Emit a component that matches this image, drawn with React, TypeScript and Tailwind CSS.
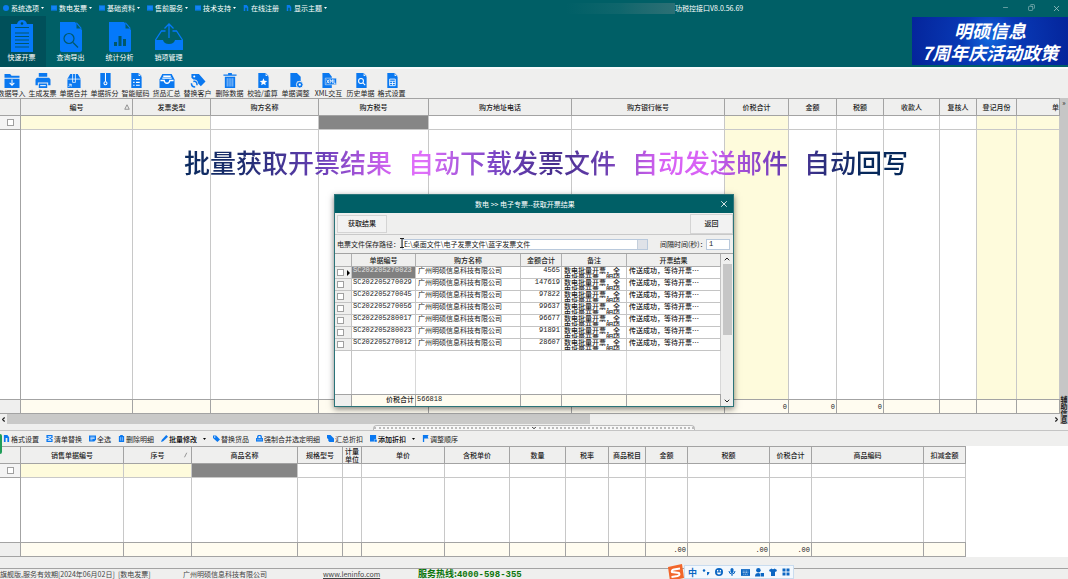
import type { ReactNode } from "react"
import { ChevronDown, ChevronLeft, ChevronRight, ChevronUp, Copy, Minus, X } from "lucide-react"

type Column = {
  label: string
  width?: string
  active?: "yellow" | "gray"
  yellow?: boolean
  total?: string
  mark?: string
  align?: string
}

const invoiceColumns: Column[] = [
  { label: "编号", width: "w-[112px]", active: "yellow", mark: "M4 1 7 7H1z" },
  { label: "发票类型", width: "w-[78px]", active: "yellow" },
  { label: "购方名称", width: "w-[108px]" },
  { label: "购方税号", width: "w-[110px]", active: "gray" },
  { label: "购方地址电话", width: "w-[143px]" },
  { label: "购方银行帐号", width: "w-[153px]" },
  { label: "价税合计", width: "w-[64px]", yellow: true, total: "0" },
  { label: "金额", width: "w-[48px]", total: "0" },
  { label: "税额", width: "w-[47px]", total: "0" },
  { label: "收款人", width: "w-[56px]" },
  { label: "复核人", width: "w-[37px]" },
  { label: "登记月份", width: "w-[40px]", yellow: true },
  { label: "单", yellow: true, align: "text-right" },
]

const detailColumns: Column[] = [
  { label: "销售单据编号", width: "w-[103px]", active: "yellow" },
  { label: "序号", width: "w-[68px]", active: "yellow", mark: "M2 7 5 1" },
  { label: "商品名称", width: "w-[106px]", active: "gray" },
  { label: "规格型号", width: "w-[45px]" },
  { label: "计量单位", width: "w-[19px]" },
  { label: "单价", width: "w-[83px]" },
  { label: "含税单价", width: "w-[65px]" },
  { label: "数量", width: "w-[56px]" },
  { label: "税率", width: "w-[43px]" },
  { label: "商品税目", width: "w-[37px]" },
  { label: "金额", width: "w-[42px]", total: ".00" },
  { label: "税额", width: "w-[82px]", total: ".00" },
  { label: "价税合计", width: "w-[42px]", total: ".00" },
  { label: "商品编码", width: "w-[112px]" },
  { label: "扣减金额", width: "w-[42px]" },
]

const results = [
  ["SC202205270023", "4565"],
  ["SC202205270029", "147619"],
  ["SC202205270045", "97822"],
  ["SC202205270056", "99637"],
  ["SC202205280017", "96677"],
  ["SC202205280023", "91891"],
  ["SC202205270012", "28607"],
]

const slogans = ["批量获取开票结果", "自动下载发票文件", "自动发送邮件", "自动回写"]

function Svg({ className, children, box = "0 0 16 16" }: { className: string; children: ReactNode; box?: string }) {
  return (
    <svg viewBox={box} className={className} fill="currentColor" aria-hidden="true">
      {children}
    </svg>
  )
}

// white strokes drawn on top of the blue shapes
const line = { fill: "none", stroke: "#fff", strokeWidth: 1.1 }
const dark = { fill: "none", stroke: "#00586a", strokeWidth: 1.2 }
const page = <path d="M3 0h7l4 4v12H3zM10.800 0v3.300H14z" />

const toolbar: { label: string; wide?: boolean; icon: ReactNode }[] = [
  { label: "数据导入", icon: <><path d="M0 1h6l1.500 2H16v2H0zM0 6h16v10H0z" /><path {...line} d="M8 7v6M5.500 10.500 8 13l2.500-2.500" /></> },
  { label: "生成发票", icon: <><path d="M3.500 0h9v4h-9zM1.500 5h13L16 7v6h-2.500v-3h-11v3H0V7zM3.500 11.200h9V16h-9z" /><path {...line} d="M5 13.500h6" /></> },
  { label: "单据合并", icon: <><path d="M4 1h8l3 5v10H1V6z" /><path {...line} strokeWidth={0.800} d="M1 6.500h14M6.500 1v9h3V1M2 15l3-3M2.500 12H5v2.500" /></> },
  { label: "单据拆分", icon: <><path d="M3 0h11v16H3z" /><path {...line} d="M8.500 0v9" /><circle {...line} cx="8.500" cy="11" r="1.600" /></> },
  { label: "智能赋码", icon: <>{page}<path {...line} d="M5 7h1.500M8 7h4M5 10h1.500M8 10h4M5 13h1.500M8 13h4" /></> },
  { label: "货品汇总", icon: <><path d="M3 1h10l3 6v9H0V7z" /><path {...line} d="M4 3.500h8M3 5.500h10M1 8h4q.5 3 3 3t3-3h4" strokeWidth={1.500} /></> },
  { label: "替换客户", icon: <><path d="M1 1h8l7 8-5 5-3-3a4 4 0 0 0-5-4L1 5z" /><circle cx="4" cy="3.800" r="1.100" fill="#fff" /><path d="M3 9q4-1 4 4M1 11q0 4 4 4" fill="none" stroke="currentColor" strokeWidth="1.600" /></> },
  { label: "删除数据", wide: true, icon: <><path d="M6 0h4v1.500h5V3H1V1.500h5zM2.500 4h11v12h-11z" /><path {...line} d="M5 5.500v9M7 5.500v9M9 5.500v9M11 5.500v9" strokeWidth={0.600} /></> },
  { label: "校验/重算", wide: true, icon: <>{page}<path fill="#fff" d="m8.500 5.500 1.100 2.700 2.900.2-2.200 1.900.7 2.800-2.500-1.500L6 13.100l.7-2.800-2.200-1.900 2.900-.2z" /></> },
  { label: "单据调整", wide: true, icon: <><path d="M2 0h7l4 4v5H9v6H2z" /><circle cx="12" cy="12.500" r="3.600" stroke="#efefee" /><circle cx="12" cy="12.500" r="1.200" fill="#fff" /></> },
  { label: "XML交互", wide: true, icon: <><path d="M1 0h7l3 4v12H1z" /><path d="M4 5.500h12v7H4z" stroke="#efefee" strokeWidth="0.600" /><path {...line} strokeWidth={0.900} d="m5.500 7 2.500 4M8 7l-2.500 4M9.300 11V7l1.300 2 1.300-2v4M13.300 7v4h1.700" /></> },
  { label: "历史单据", icon: <>{page}<circle {...line} cx="8" cy="8.500" r="2.600" /><path {...line} d="m10 10.500 2.500 2.500" /></> },
  { label: "格式设置", icon: <>{page}<path {...line} strokeWidth={0.900} d="M5.500 6.500h6v7h-6zM5.500 8.800h6M5.500 11.200h6M8.500 9v4" /></> },
]

const ribbon: { label: string; icon: ReactNode }[] = [
  { label: "快速开票", icon: <><path d="M5 4h6q1-4 5-4t5 4h6v28H5z" /><circle cx="16" cy="3.500" r="1.300" fill="#00505c" /><path {...dark} d="M9 7.500h14M9 13h14M9 16.500h14M9 20h14M9 23.500h14M9 27h14" /></> },
  { label: "查询导出", icon: <><path d="M5 2h15l7 8v20q0 2-2 2H7q-2 0-2-2zM21.500 2v6.500H27z" /><circle {...dark} cx="14" cy="18.500" r="5" /><path {...dark} d="m18 22.500 5 5" /></> },
  { label: "统计分析", icon: <><path d="M5 2h15l7 8v20q0 2-2 2H7q-2 0-2-2zM21.500 2v6.500H27z" /><path fill="#00586a" d="M10 22h3v4h-3zM14.500 16h3v10h-3zM19 19h3v7h-3z" /></> },
  { label: "销项管理", icon: <><path d="M2 20h8q1 4 6 4t6-4h8v10H2z" /><path fill="none" stroke="currentColor" strokeWidth="1.300" d="M2.500 20l6-9h4M29.500 20l-6-9h-4M16 18V4M11.500 8.500 16 4l4.500 4.500" /></> },
]

const smallFile = <path d="M2 0h8l4 5v11H2zM6 7v9h4V7z" fillRule="evenodd" />
const smallBox = <><path d="M0 1h16v14H0z" /><path {...line} d="M3 5h10M3 8.500h10" stroke="#3a9dff" /></>

const menus = [
  { label: "系统选项", arrow: true, icon: <circle cx="8" cy="8" r="8" /> },
  { label: "数电发票", arrow: true, icon: smallBox },
  { label: "基础资料", arrow: true, icon: smallBox },
  { label: "售前服务", arrow: true, icon: smallBox },
  { label: "技术支持", arrow: true, icon: smallBox },
  { label: "在线注册", arrow: false, icon: smallFile },
  { label: "显示主题", arrow: true, icon: smallFile },
]

const detailTools = [
  { label: "格式设置", icon: smallFile },
  { label: "清单替换", icon: <><path d="M1 0h14v16H1z" /><path {...line} strokeWidth={2} d="M4 4h8l-7 4 7 4H4M0 8h4M12 8h4" /></> },
  { label: "全选", icon: <><path d="M0 1h16v10l-4 4H0z" /><path {...line} strokeWidth={1.500} d="M3 5h10M3 8h10M3 11h5" /></> },
  { label: "删除明细", icon: <><path d="M2 2h3V0h6v2h3v14H2z" /><path {...line} d="M6 5v8M10 5v8" /></> },
  { label: "批量修改", arrow: true, icon: <path d="M12 0l4 4L5 14l-5 2 2-5z" /> },
  { label: "替换货品", icon: <><path d="M0 1h7l9 9-6 6-10-9z" /><circle cx="4" cy="4.500" r="1.500" fill="#fff" /></> },
  { label: "强制合并选定明细", icon: <><path d="M0 7h16v8H0z" /><path d="M4 7V4q0-3 4-3t4 3v3" fill="none" stroke="currentColor" strokeWidth="3" /><path {...line} d="M2 11h12" /></> },
  { label: "汇总折扣", icon: <path d="M0 0h8l5 5 3 3v8H5l-1-5-4-4zM3 9l3 3-3 3z" /> },
  { label: "添加折扣", arrow: true, icon: <><path d="M0 0h14v15H0z" /><path d="M10 10h6v6h-6z" stroke="#efefee" /></> },
  { label: "调整顺序", icon: <path d="M2 0h13l-2 4 2 4H5v8H2z" /> },
]

function Caret() {
  return (
    <svg viewBox="0 0 6 4" className="h-[2px] w-[3px] shrink-0" fill="currentColor" aria-hidden="true">
      <path d="M0 0h6L3 4z" />
    </svg>
  )
}

function CheckBox({ label }: { label: string }) {
  return (
    <input type="checkbox" aria-label={label} className="block mx-auto size-[7px] appearance-none border border-[#a0a0a0] bg-white checked:bg-blue-600" />
  )
}

function DataGrid({ columns, name, className }: { columns: Column[]; name: string; className: string }) {
  return (
    <table className={`h-full table-fixed border-separate border-spacing-0 leading-[8px] ${className}`}>
      <thead>
        <tr className="bg-[#efefee]">
          <th aria-label="选择" className="h-[18px] w-[21px] border-y border-r border-[#a3a3a3]" />
          {columns.map((col) => (
            <th key={col.label} className={`relative h-[18px] border-y border-r border-[#a3a3a3] p-0 font-medium ${col.width ?? ""} ${col.align ?? ""}`}>
              {col.label}
              {col.mark && (
                <svg viewBox="0 0 8 8" className="absolute top-[5px] right-[2px] size-[6px]" fill="none" stroke="#777" aria-hidden="true">
                  <path d={col.mark} />
                </svg>
              )}
            </th>
          ))}
        </tr>
      </thead>
      <tbody>
        <tr>
          <td className="h-[14px] border-r border-b border-[#a3a3a3] bg-[#f4f4f4]">
            <CheckBox label={name} />
          </td>
          {columns.map((col) => (
            <td
              key={col.label}
              className={`h-[14px] border-r border-b border-[#c8c8c8] ${
                col.active === "gray" ? "bg-[#868686]" : col.active === "yellow" || col.yellow ? "bg-[#fefbdc]" : "bg-white"
              }`}
            />
          ))}
        </tr>
        <tr>
          <td className="border-r border-[#a3a3a3] bg-white" />
          {columns.map((col) => (
            <td key={col.label} className={`border-r border-[#c8c8c8] ${col.yellow ? "bg-[#fefbdc]" : "bg-white"}`} />
          ))}
        </tr>
      </tbody>
      <tfoot className="bg-[#fffcf0] text-right font-['Liberation_Mono',monospace]">
        <tr>
          <td className="h-[15px] border-y border-r border-[#a3a3a3] bg-[#efefee]" />
          {columns.map((col) => (
            <td key={col.label} className="h-[15px] border-y border-r border-[#a3a3a3] pr-px">
              {col.total}
            </td>
          ))}
        </tr>
      </tfoot>
    </table>
  )
}

function Header() {
  return (
    <header className="shrink-0 bg-[#005f66] text-white">
      <div className="flex h-[16px] items-center">
        <nav className="flex basis-[53%] items-center gap-[7px] pl-[3px]">
          {menus.map((menu) => (
            <button key={menu.label} className="flex items-center gap-[2px] leading-[10px]">
              <Svg className="size-[6px] text-[#087cf0]">{menu.icon}</Svg>
              {menu.label}
              {menu.arrow && <Caret />}
            </button>
          ))}
        </nav>
        <div className="h-[11px] w-[109px] bg-linear-to-r from-[#005f66] via-[#0f666c] to-[#2c7075]" />
        <h1 className="leading-[10px]">功税控接口V8.0.56.69</h1>
        <div className="ml-auto flex text-[#a9c9cb]">
          <button aria-label="最小化" className="flex w-[26px] justify-center"><Minus size={7} /></button>
          <button aria-label="还原" className="flex w-[26px] justify-center"><Copy size={7} className="-scale-x-100" /></button>
          <button aria-label="关闭" className="flex w-[24px] justify-center"><X size={9} /></button>
        </div>
      </div>
      <div className="flex h-[51px] items-stretch">
        {ribbon.map((item, i) => (
          <button
            key={item.label}
            className={`flex flex-col items-center pt-[4px] leading-[11px] ${i === 0 ? "w-[46px] bg-[#00505a] pr-[3px]" : "w-[49px]"}`}
          >
            <Svg box="0 0 32 32" className="size-[32px] text-[#0479fa]">{item.icon}</Svg>
            {item.label}
          </button>
        ))}
        <a
          href="#promo"
          className="ml-auto mt-px mb-[2px] flex w-[156px] flex-col items-center justify-center bg-[radial-gradient(circle_at_50%_45%,#1268dd_0%,#0838b4_35%,#04249a_100%)] text-[18px] leading-[22px] font-bold italic"
        >
          <span>明硕信息</span>
          <span>7周年庆活动政策</span>
        </a>
      </div>
    </header>
  )
}

function ResultDialog() {
  const cell = "h-[12px] border-r border-b border-[#c4c4c4] p-0 align-top leading-[7px]"
  const head = "h-[13px] border-r border-b border-[#b0b0b0] p-0 font-medium"
  return (
    <section
      role="dialog"
      aria-labelledby="dialog-title"
      className="absolute top-[194px] left-1/2 flex h-[213px] w-[400px] -translate-x-1/2 flex-col border border-[#2b7479] bg-[#efefee] shadow-[0_2px_6px_rgba(0,0,0,0.5)]"
    >
      <div className="relative flex h-[18px] shrink-0 items-center justify-center bg-[#005f66] text-white">
        <h2 id="dialog-title" className="pr-[18px] leading-[10px]">数电 &gt;&gt; 电子专票--获取开票结果</h2>
        <button aria-label="关闭窗口" className="absolute right-[4px] top-[4px]"><X size={10} /></button>
      </div>
      <div className="flex h-[22px] shrink-0 items-center justify-between border-b border-[#c9c9c9] pl-[2px]">
        <button className="h-[18px] w-[50px] border border-[#d4d4d4] bg-[#f2f2f2] font-medium">获取结果</button>
        <button className="h-[20px] w-[43px] border border-[#d4d4d4] bg-[#f2f2f2] font-medium">返回</button>
      </div>
      <div className="flex h-[18px] shrink-0 items-center pl-[2px] pr-[3px]">
        <label htmlFor="path" className="w-[65px] shrink-0">电票文件保存路径：</label>
        <div className="flex h-[11px] min-w-0 flex-1 border border-[#b9c9dc] bg-white">
          <input id="path" className="min-w-0 flex-1 pl-px leading-[9px] outline-none" defaultValue="E:\桌面文件\电子发票文件\蓝字发票文件" />
          <button aria-label="浏览" className="w-[10px] border-l border-[#c4cfdc] bg-[#dfe2e8]" />
        </div>
        <label htmlFor="interval" className="ml-[12px] w-[46px] shrink-0">间隔时间(秒)：</label>
        <input id="interval" className="h-[11px] w-[24px] border border-[#b9c9dc] bg-white pl-[2px] font-['Liberation_Mono',monospace]" defaultValue="1" />
      </div>
      <div className="flex min-h-0 flex-1 border-t border-[#a3a3a3]">
        <table className="h-full flex-1 table-fixed border-separate border-spacing-0 bg-white leading-[8px]">
          <thead className="bg-[#efefee]">
            <tr>
              <th aria-label="选择" className={`w-[17px] ${head}`} />
              <th className={`w-[64px] ${head}`}>单据编号</th>
              <th className={`w-[105px] ${head}`}>购方名称</th>
              <th className={`w-[41px] ${head}`}>金额合计</th>
              <th className={`w-[65px] ${head}`}>备注</th>
              <th className={head}>开票结果</th>
            </tr>
          </thead>
          <tbody>
            {results.map(([id, amount], i) => (
              <tr key={id}>
                <td className={`bg-[#efefee] ${cell}`}>
                  <div className="flex items-center gap-[3px] pt-[2px] pl-[2px]">
                    <input type="checkbox" aria-label={id} className="size-[7px] appearance-none border border-[#a0a0a0] bg-white checked:bg-blue-600" />
                    {i === 0 && (
                      <svg viewBox="0 0 4 8" className="h-[6px] w-[3px]" aria-hidden="true"><path d="M0 0l4 4-4 4z" /></svg>
                    )}
                  </div>
                </td>
                <td className={`font-['Liberation_Mono',monospace] ${i === 0 ? "bg-[#808080] text-[#e4e4e4]" : ""} ${cell}`}>
                  <span className="pl-px">{id}</span>
                </td>
                <td className={cell}><span className="pl-[2px]">广州明硕信息科技有限公司</span></td>
                <td className={`text-right font-['Liberation_Mono',monospace] ${cell}`}><span className="pr-px">{amount}</span></td>
                <td className={cell}>
                  <div className="ml-[2px] h-[11px] w-[58px] overflow-hidden font-medium break-all whitespace-normal">
                    数电批量开票，全电批量开票，明硕
                  </div>
                </td>
                <td className={cell}><span className="pl-[2px] font-medium">传送成功，等待开票⋯</span></td>
              </tr>
            ))}
            <tr>
              <td className="border-r border-[#c4c4c4]" />
              <td className="border-r border-[#d8d8d8]" />
              <td className="border-r border-[#d8d8d8]" />
              <td className="border-r border-[#d8d8d8]" />
              <td className="border-r border-[#d8d8d8]" />
              <td className="border-r border-[#d8d8d8]" />
            </tr>
          </tbody>
          <tfoot className="bg-[#fffcf0]">
            <tr>
              <td className="h-[12px] border-t border-r border-[#a3a3a3] bg-[#efefee]" />
              <td className="h-[12px] border-t border-r border-[#a3a3a3] p-0 pr-px text-right align-top font-medium">价税合计</td>
              <td className="h-[12px] border-t border-r border-[#a3a3a3] p-0 pl-px align-top font-['Liberation_Mono',monospace]">566818</td>
              <td className="border-t border-r border-[#a3a3a3]" />
              <td className="border-t border-r border-[#a3a3a3]" />
              <td className="border-t border-r border-[#a3a3a3]" />
            </tr>
          </tfoot>
        </table>
        <div className="flex w-[12px] flex-col items-center bg-[#efefee] py-px">
          <ChevronUp size={8} strokeWidth={3} />
          <div className="mt-px h-[71px] w-[9px] bg-[#c6c6c6]" />
          <ChevronDown size={8} strokeWidth={3} className="mt-auto" />
        </div>
      </div>
      {/* text cursor resting on the path box */}
      <svg viewBox="0 0 4 10" className="absolute top-[43px] left-[65px] h-[10px] w-[4px]" aria-hidden="true">
        <path d="M0 .5h4M2 0v10M0 9.500h4" stroke="#222" fill="none" />
      </svg>
    </section>
  )
}

function ImeBar() {
  return (
    <div className="absolute bottom-0 left-[667px] flex h-[14px] items-center text-[#0b66c3]">
      <Svg className="size-[17px] shrink-0" box="0 0 17 17">
        <path d="M1 3 15 0l2 14-14 3z" fill="#f2662a" />
        <path d="M13 4.500 7 5.500q-3 .8-2 2.500l7 1q1.500 2-1.500 3l-6 1" fill="none" stroke="#fff" strokeWidth="2" />
      </Svg>
      <div className="flex h-full items-center gap-[5px] border border-[#c9dcef] bg-[#f3f8fd] px-[3px]">
        <span className="text-[9px] leading-[9px] font-bold">中</span>
        <Svg className="size-[8px]"><circle cx="4" cy="5" r="2.500" /><path d="M10 8h5q0 5-5 7z" /></Svg>
        <Svg className="size-[8px]"><circle cx="8" cy="8" r="8" /><path fill="#fff" d="M4 4h2.500v3H4zM9.500 4H12v3H9.500zM3.500 9h9q-1 4-4.500 4T3.500 9z" /></Svg>
        <Svg className="size-[8px]"><rect x="5" width="6" height="10" rx="3" /><path d="M2 6q0 6 6 6t6-6M8 12v4" fill="none" stroke="currentColor" strokeWidth="2" /></Svg>
        <Svg className="size-[9px]"><path d="M0 2h16v12H0z" /><path {...line} d="M3 5.500h10M3 8h10M4 11h8" strokeDasharray="2 1" /></Svg>
        <Svg className="size-[9px]"><circle cx="6" cy="4" r="4" /><path d="M0 15q0-6 6-6 2 0 3 1v5zM10 9h6v6h-6z" /></Svg>
        <Svg className="size-[8px]"><path d="M5 1q3 3 6 0l5 3-2 4-2-1v9H4V7L2 8 0 4z" /></Svg>
        <Svg className="size-[8px]"><path d="M1 1h6v6H1zM9 1h6v6H9zM1 9h6v6H1zM9 9h6v6H9z" /></Svg>
      </div>
    </div>
  )
}

export default function App() {
  return (
    <div lang="zh-CN" className="relative flex h-screen flex-col overflow-hidden bg-[#efefee] font-['Noto_Sans_CJK_SC',sans-serif] text-[7px] whitespace-nowrap text-[#222]">
      <Header />

      <div className="flex h-[31px] shrink-0 border-t-2 border-[#f8fafb]">
        <div className="-ml-[4px] flex pt-[4px]">
          {toolbar.map((tool) => (
            <button key={tool.label} className={`flex flex-col items-center leading-[10px] ${tool.wide ? "w-[33px]" : "w-[31px]"}`}>
              <Svg className="h-[15px] w-[16px] shrink-0 text-[#0a78f0]">{tool.icon}</Svg>
              {tool.label}
            </button>
          ))}
        </div>
      </div>

      <main className="flex min-h-0 flex-1">
        <div className="flex min-w-0 flex-1 flex-col">
          <div className="min-h-0 flex-1">
            <DataGrid columns={invoiceColumns} name="发票" className="w-full" />
          </div>
          <div className="flex h-[10px] shrink-0 items-center">
            <ChevronLeft size={7} strokeWidth={4} className="shrink-0" />
            <div className="h-full w-[55%] bg-[#c9c9c8]" />
            <ChevronRight size={7} strokeWidth={4} className="ml-auto shrink-0" />
          </div>
        </div>
        <aside className="flex w-[8px] flex-col items-center justify-between bg-[#c6c6c6] leading-[8px]">
          <span>»</span>
          <span className="font-bold [writing-mode:vertical-rl]">辅助信息</span>
        </aside>
      </main>

      <div className="flex h-[7px] shrink-0 items-center justify-center border-b border-[#c4c4c4]">
        <button aria-label="折叠明细" className="flex h-[5px] w-[322px] items-center justify-center gap-[2px] rounded-t border border-b-0 border-[#bbb] bg-[#f8f8f8]">
          <span className="flex-1 border-b-2 border-dotted border-[#bbb]" />
          <ChevronDown size={6} strokeWidth={4} />
          <span className="flex-1 border-b-2 border-dotted border-[#bbb]" />
        </button>
      </div>

      <div className="flex h-[15px] shrink-0 items-center gap-[7px] pl-[3px]">
        {detailTools.map((tool) => (
          <button key={tool.label} className={`flex items-center leading-[10px] ${tool.arrow ? "font-medium text-black" : ""}`}>
            <Svg className="mr-px size-[7px] text-[#0a78f0]">{tool.icon}</Svg>
            {tool.label}
            {tool.arrow && <span className="ml-[6px]"><Caret /></span>}
          </button>
        ))}
      </div>

      <div className="h-[111px] shrink-0 bg-white">
        <DataGrid columns={detailColumns} name="明细" className="w-[966px] [&_th]:whitespace-normal" />
      </div>

      <footer className="mt-[11px] flex h-[11px] shrink-0 items-center border-t border-[#a3a3a3] leading-[10px] text-[#444]">
        <span className="w-[183px]">旗舰版,服务有效期[2024年06月02日]&nbsp; [数电发票]</span>
        <span className="w-[140px]">广州明硕信息科技有限公司</span>
        <span className="w-[95px]"><a href="#home" className="underline">www.leninfo.com</a></span>
        <strong className="text-[9px] text-[#0b750b]">
          服务热线:<span className="font-['Liberation_Mono',monospace]">4000-598-355</span>
        </strong>
      </footer>

      <p className="absolute top-[145px] left-[184px] flex gap-[16px] bg-[linear-gradient(90deg,#0a2a5e_0%,#1c2c6e_8%,#6a3fb8_19%,#d966f5_29%,#e070fa_33%,#7a45c5_43%,#452e8c_51%,#6a3fb0_58%,#d862f5_66%,#d862f5_72%,#7b3fc0_81%,#2f2f80_88%,#06285a_94%)] bg-clip-text text-[26px] leading-[34px] font-medium text-transparent">
        {slogans.map((slogan) => (
          <span key={slogan}>{slogan}</span>
        ))}
      </p>
      <div className="absolute bottom-[125px] left-0 h-[20px] w-[2px] rounded-r bg-[#1f9d58]" />

      <ResultDialog />
      <ImeBar />
    </div>
  )
}
